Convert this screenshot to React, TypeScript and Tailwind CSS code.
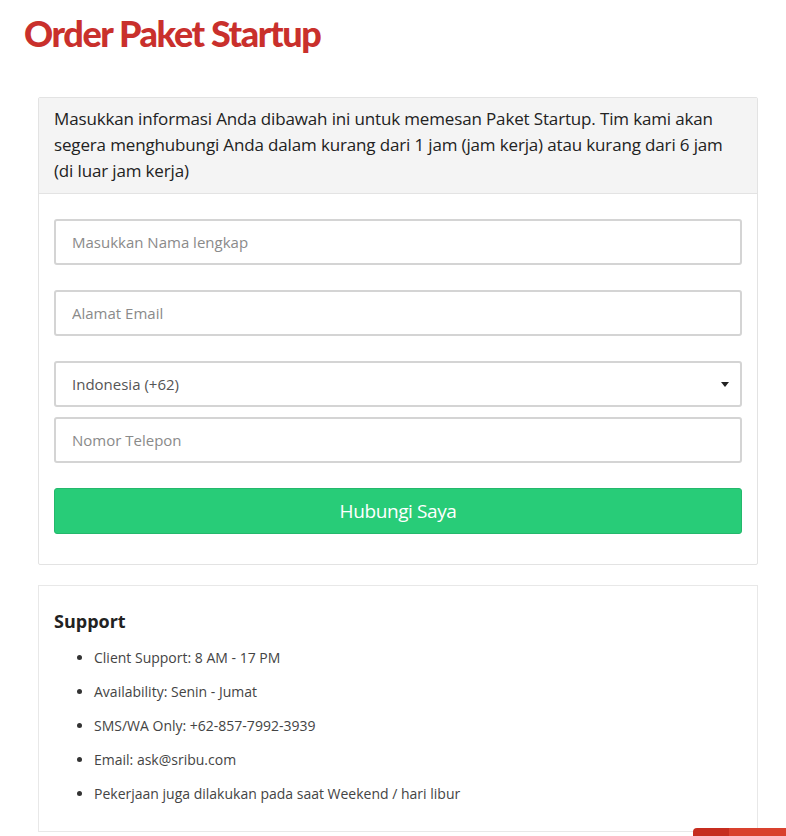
export default function App() {
  const support = [
    "Client Support: 8 AM - 17 PM",
    "Availability: Senin - Jumat",
    "SMS/WA Only: +62-857-7992-3939",
    "Email: ask@sribu.com",
    "Pekerjaan juga dilakukan pada saat Weekend / hari libur",
  ];

  return (
    <div className="relative min-h-[836px] bg-white font-['Open_Sans',sans-serif] text-[#222]">
      <h1 className="pl-6 pt-[11px] font-['Lato',sans-serif] text-[36px] font-black leading-[44px] tracking-[-1.4px] text-[#c9302c]">
        Order Paket Startup
      </h1>

      <div className="ml-[38px] mr-[28px] mt-[42px] border border-[#e3e3e3] rounded-[2px]">
        {/* Header */}
        <div className="bg-[#f4f4f4] border-b border-[#e3e3e3] px-[15px] pt-[8px] pb-[9px] text-[17px] leading-[26px] tracking-[-0.15px] text-[#222]">
          Masukkan informasi Anda dibawah ini untuk memesan Paket Startup. Tim kami akan segera menghubungi Anda dalam kurang dari 1 jam (jam kerja) atau kurang dari 6 jam (di luar jam kerja)
        </div>

        {/* Form */}
        <div className="px-[15px] pt-[25px] pb-[30px] flex flex-col">
          <input
            className="h-[46px] w-full rounded-[3px] border-2 border-[#d4d4d4] px-4 text-[15px] outline-none placeholder:text-[#8a8a8a]"
            placeholder="Masukkan Nama lengkap"
          />
          <input
            className="mt-[25px] h-[46px] w-full rounded-[3px] border-2 border-[#d4d4d4] px-4 text-[15px] outline-none placeholder:text-[#8a8a8a]"
            placeholder="Alamat Email"
          />
          <div className="mt-[25px] h-[46px] w-full rounded-[3px] border-2 border-[#d4d4d4] pl-4 pr-[11px] flex items-center justify-between text-[15px] text-[#555]">
            <span>Indonesia (+62)</span>
            <span className="h-0 w-0 border-x-[4px] border-t-[5px] border-x-transparent border-t-[#222]" />
          </div>
          <input
            className="mt-[10px] h-[46px] w-full rounded-[3px] border-2 border-[#d4d4d4] px-4 text-[15px] outline-none placeholder:text-[#8a8a8a]"
            placeholder="Nomor Telepon"
          />
          <button className="mt-[25px] h-[46px] w-full rounded-[3px] bg-[#28cc78] border border-[#24b86c] text-white text-[19px] tracking-[-0.4px]">
            Hubungi Saya
          </button>
        </div>
      </div>

      <div className="ml-[38px] mr-[28px] mt-[20px] border border-[#e8e8e8] px-[15px] pt-[21px] pb-[27px]">
        <h3 className="text-[18px] font-bold leading-[28px] text-[#222]">Support</h3>
        <ul className="mt-[13px] list-disc pl-10 text-[14px] text-[#444] marker:text-[#333]">
          {support.map((s) => (
            <li key={s} className="leading-[20px] mb-[14px] last:mb-0">
              {s}
            </li>
          ))}
        </ul>
      </div>

      {/* floating chat tab */}
      <div className="absolute right-0 top-[828px] flex h-[8px] w-[93px] overflow-hidden rounded-tl-[4px]">
        <div className="w-[36px] bg-[#c62d1f]" />
        <div className="flex-1 bg-[#d9412e]" />
      </div>
    </div>
  );
}
